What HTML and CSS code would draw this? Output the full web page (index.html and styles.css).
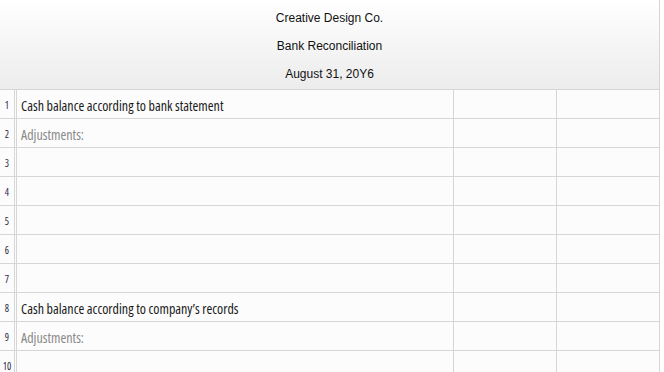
FILE: index.html
```html
<!DOCTYPE html>
<html>
<head>
<meta charset="utf-8">
<link rel="stylesheet" href="styles.css">
</head>
<body>
<div class="sheet">
  <div class="head">
    <div class="head-line">Creative Design Co.</div>
    <div class="head-line">Bank Reconciliation</div>
    <div class="head-line">August 31, 20Y6</div>
  </div>
  <div class="row"><div class="num">1</div><div class="label">Cash balance according to bank statement</div><div class="amt"></div><div class="amt"></div></div>
  <div class="row"><div class="num">2</div><div class="label muted">Adjustments:</div><div class="amt"></div><div class="amt"></div></div>
  <div class="row"><div class="num">3</div><div class="label"></div><div class="amt"></div><div class="amt"></div></div>
  <div class="row"><div class="num">4</div><div class="label"></div><div class="amt"></div><div class="amt"></div></div>
  <div class="row"><div class="num">5</div><div class="label"></div><div class="amt"></div><div class="amt"></div></div>
  <div class="row"><div class="num">6</div><div class="label"></div><div class="amt"></div><div class="amt"></div></div>
  <div class="row"><div class="num">7</div><div class="label"></div><div class="amt"></div><div class="amt"></div></div>
  <div class="row"><div class="num">8</div><div class="label">Cash balance according to company’s records</div><div class="amt"></div><div class="amt"></div></div>
  <div class="row"><div class="num">9</div><div class="label muted">Adjustments:</div><div class="amt"></div><div class="amt"></div></div>
  <div class="row"><div class="num">10</div><div class="label"></div><div class="amt"></div><div class="amt"></div></div>
</div>
</body>
</html>
```
FILE: styles.css
```css
html, body {
  margin: 0;
  padding: 0;
  background: #ffffff;
}
.sheet {
  width: 660px;
  display: flex;
  flex-direction: column;
}
.head {
  height: 85px;
  padding: 4px 0 0 0;
  border-right: 1px solid #d6d6d6;
  border-bottom: 1px solid #d6d6d6;
  background: linear-gradient(#ffffff, #ececec);
  display: flex;
  flex-direction: column;
  align-items: center;
  box-sizing: content-box;
  width: 659px;
}
.head-line {
  height: 28px;
  line-height: 28px;
  font-family: "Liberation Sans", Arial, sans-serif;
  font-size: 12px;
  color: #111;
}
.row {
  display: flex;
  height: 28px;
  border-bottom: 1px solid #d6d6d6;
  background: #fcfcfc;
}
.num {
  padding-top: 2px;
  box-sizing: border-box;
  border-right: 1px solid #d6d6d6;
  width: 15px;
  margin-right: 1px;
  font-family: "Open Sans", "DejaVu Sans Condensed", sans-serif;
  font-stretch: 75%;
  font-size: 10px;
  color: #1f2a44;
  display: flex;
  align-items: center;
  justify-content: center;
}
.label {
  width: 432px;
  padding-left: 4px;
  padding-top: 2px;
  border-left: 1px solid #d6d6d6;
  border-right: 1px solid #d6d6d6;
  font-family: "Open Sans", "Liberation Sans", sans-serif;
  font-stretch: 75%;
  font-weight: 400;
  font-size: 14px;
  color: #1a1a1a;
  display: flex;
  align-items: center;
  white-space: nowrap;
}
.label.muted {
  color: #8a8a8a;
}
.amt {
  width: 102px;
  border-right: 1px solid #d6d6d6;
}
```
